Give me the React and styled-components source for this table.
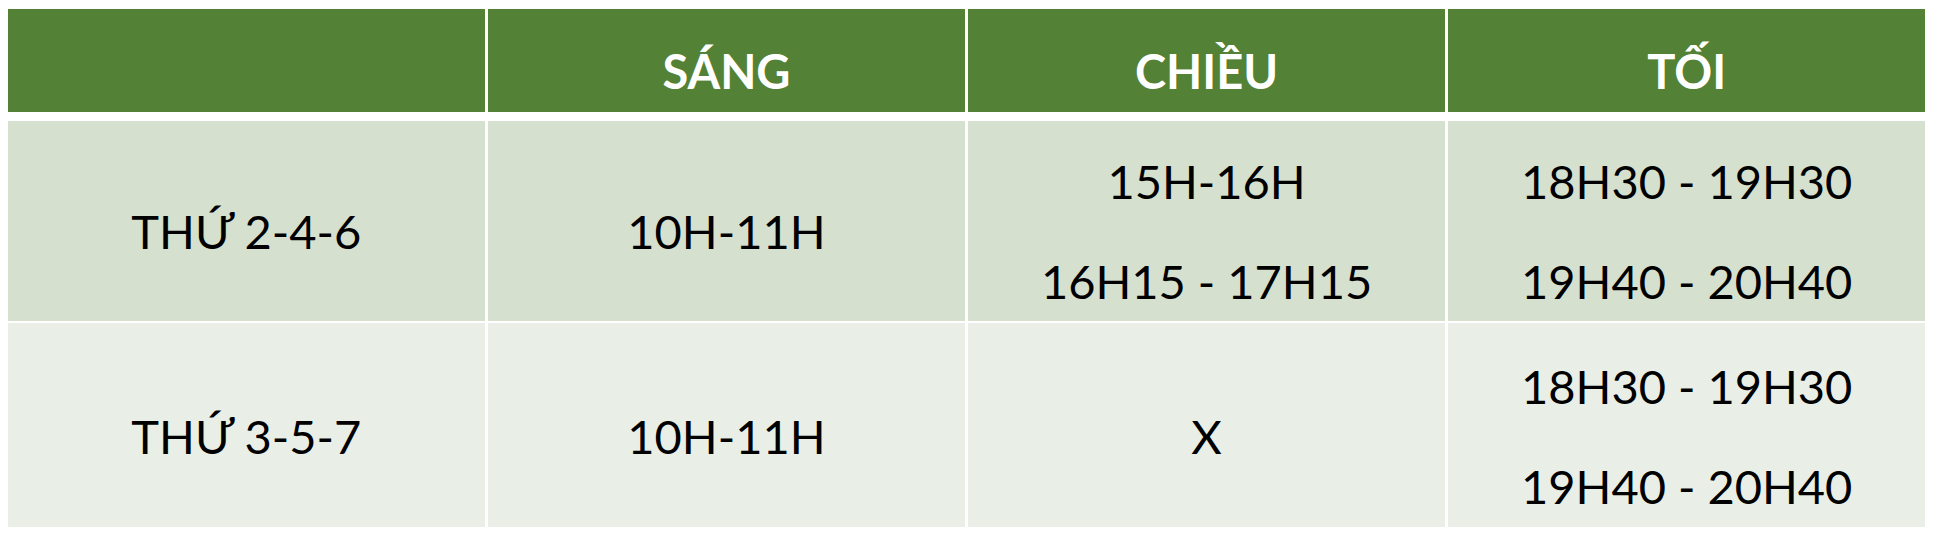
import React from "react";
import styled, { createGlobalStyle } from "styled-components";

const GlobalStyle = createGlobalStyle`
  html, body {
    margin: 0;
    padding: 0;
    background: #ffffff;
  }
  body {
    padding: 9px 8px;
    font-family: Lato, "Noto Sans", "Liberation Sans", sans-serif;
  }
`;

const Table = styled.div`
  width: 1917px;
  display: flex;
  flex-direction: column;
  gap: 2px;
`;

const Row = styled.div`
  display: grid;
  grid-template-columns: repeat(4, 1fr);
  column-gap: 3.5px;
  height: ${(p) => p.$height}px;
  margin-bottom: ${(p) => (p.$header ? 7 : 0)}px;
`;

const HeadCell = styled.div`
  background: #538135;
  color: #ffffff;
  font-weight: 700;
  font-size: 47px;
  line-height: 1;
  display: flex;
  align-items: center;
  justify-content: center;
  padding-top: 22px;
  box-sizing: border-box;
`;

const Cell = styled.div`
  background: ${(p) => (p.$band ? "#D5E0CF" : "#E9EFE7")};
  color: #000000;
  font-size: 47px;
  line-height: 1;
  display: flex;
  flex-direction: column;
  align-items: center;
  justify-content: center;
  gap: 53px;
  padding-top: ${(p) => p.$shift}px;
  box-sizing: border-box;
`;

const Line = styled.span`
  white-space: nowrap;
`;

const rows = [
  {
    height: 200,
    band: true,
    shift: 20,
    cells: [["THỨ 2-4-6"], ["10H-11H"], ["15H-16H", "16H15 - 17H15"], ["18H30 - 19H30", "19H40 - 20H40"]],
  },
  {
    height: 204,
    band: false,
    shift: 22,
    cells: [["THỨ 3-5-7"], ["10H-11H"], ["X"], ["18H30 - 19H30", "19H40 - 20H40"]],
  },
];

export default function App() {
  return (
    <>
      <GlobalStyle />
      <Table>
        <Row $header $height={103}>
          <HeadCell />
          <HeadCell>SÁNG</HeadCell>
          <HeadCell>CHIỀU</HeadCell>
          <HeadCell>TỐI</HeadCell>
        </Row>
        {rows.map((r, i) => (
          <Row key={i} $height={r.height}>
            {r.cells.map((lines, j) => (
              <Cell key={j} $band={r.band} $shift={r.shift}>
                {lines.map((t, k) => (
                  <Line key={k}>{t}</Line>
                ))}
              </Cell>
            ))}
          </Row>
        ))}
      </Table>
    </>
  );
}
